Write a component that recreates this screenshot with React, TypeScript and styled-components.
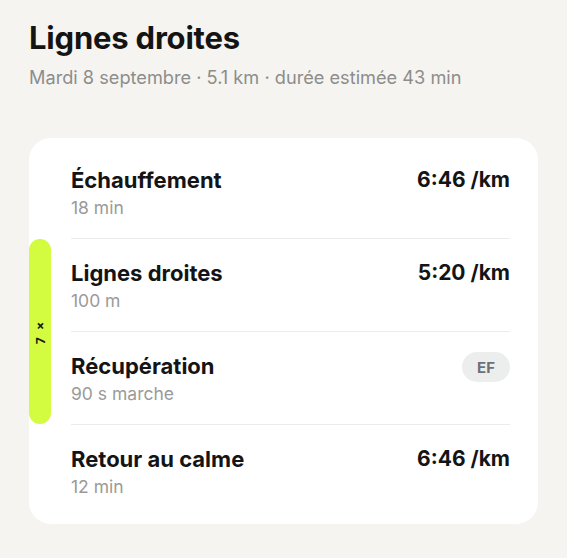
import styled, { createGlobalStyle } from 'styled-components';

const GlobalStyle = createGlobalStyle`
  html, body {
    margin: 0;
    padding: 0;
    background: #f5f4f1;
  }
  body {
    font-family: Inter, "Liberation Sans", sans-serif;
    color: #141414;
    -webkit-font-smoothing: antialiased;
  }
`;

const Page = styled.div`
  width: 567px;
  height: 558px;
  box-sizing: border-box;
  padding: 19px 29px 0 29px;
  display: flex;
  flex-direction: column;
`;

const Title = styled.h1`
  margin: 0;
  font-size: 31px;
  line-height: 37px;
  font-weight: 700;
  letter-spacing: -0.2px;
`;

const Subtitle = styled.p`
  margin: 10px 0 0;
  font-size: 18.2px;
  line-height: 22px;
  color: #8d8d8b;
`;

const Card = styled.div`
  margin-top: 50px;
  background: #fff;
  border-radius: 22px;
  padding: 7px 28px 7px 0;
  display: flex;
  flex-direction: column;
`;

const Segment = styled.div`
  display: grid;
  grid-template-columns: 42px 1fr;
`;

const Gutter = styled.div`
  display: flex;
`;

const RepeatBar = styled.div`
  width: 22px;
  margin-top: 1px;
  border-radius: 11px;
  background: #d3fb3f;
  display: flex;
  align-items: center;
  justify-content: center;
`;

const RepeatLabel = styled.span`
  writing-mode: vertical-rl;
  transform: rotate(180deg);
  font-size: 12px;
  font-weight: 700;
  color: #151515;
  letter-spacing: 0.5px;
`;

const Rows = styled.div`
  display: flex;
  flex-direction: column;
`;

const Row = styled.div<{ $divided?: boolean }>`
  display: flex;
  justify-content: space-between;
  align-items: flex-start;
  padding: 22px 0 20px;
  border-top: 1px solid ${({ $divided }) => ($divided ? '#ececea' : 'transparent')};
`;

const Info = styled.div`
  display: flex;
  flex-direction: column;
  gap: 6px;
`;

const StepName = styled.div`
  font-size: 22px;
  line-height: 24px;
  font-weight: 700;
`;

const StepDetail = styled.div`
  font-size: 17.5px;
  line-height: 20px;
  color: #9a9a98;
`;

const Pace = styled.div`
  font-size: 21px;
  line-height: 24px;
  font-weight: 700;
`;

const Badge = styled.div`
  margin-top: -2px;
  height: 30px;
  padding: 0 15px;
  border-radius: 15px;
  background: #eceeee;
  color: #6d7176;
  font-size: 15px;
  font-weight: 700;
  display: flex;
  align-items: center;
`;

type Step = { name: string; detail: string; pace?: string; badge?: string };

function StepRow({ step, divided }: { step: Step; divided?: boolean }) {
  return (
    <Row $divided={divided}>
      <Info>
        <StepName>{step.name}</StepName>
        <StepDetail>{step.detail}</StepDetail>
      </Info>
      {step.pace ? <Pace>{step.pace}</Pace> : <Badge>{step.badge}</Badge>}
    </Row>
  );
}

export default function App() {
  return (
    <>
      <GlobalStyle />
      <Page>
        <Title>Lignes droites</Title>
        <Subtitle>Mardi 8 septembre · 5.1 km · durée estimée 43 min</Subtitle>
        <Card>
          <Segment>
            <Gutter />
            <Rows>
              <StepRow step={{ name: 'Échauffement', detail: '18 min', pace: '6:46 /km' }} />
            </Rows>
          </Segment>
          <Segment>
            <Gutter>
              <RepeatBar>
                <RepeatLabel>7 ×</RepeatLabel>
              </RepeatBar>
            </Gutter>
            <Rows>
              <StepRow divided step={{ name: 'Lignes droites', detail: '100 m', pace: '5:20 /km' }} />
              <StepRow divided step={{ name: 'Récupération', detail: '90 s marche', badge: 'EF' }} />
            </Rows>
          </Segment>
          <Segment>
            <Gutter />
            <Rows>
              <StepRow divided step={{ name: 'Retour au calme', detail: '12 min', pace: '6:46 /km' }} />
            </Rows>
          </Segment>
        </Card>
      </Page>
    </>
  );
}
